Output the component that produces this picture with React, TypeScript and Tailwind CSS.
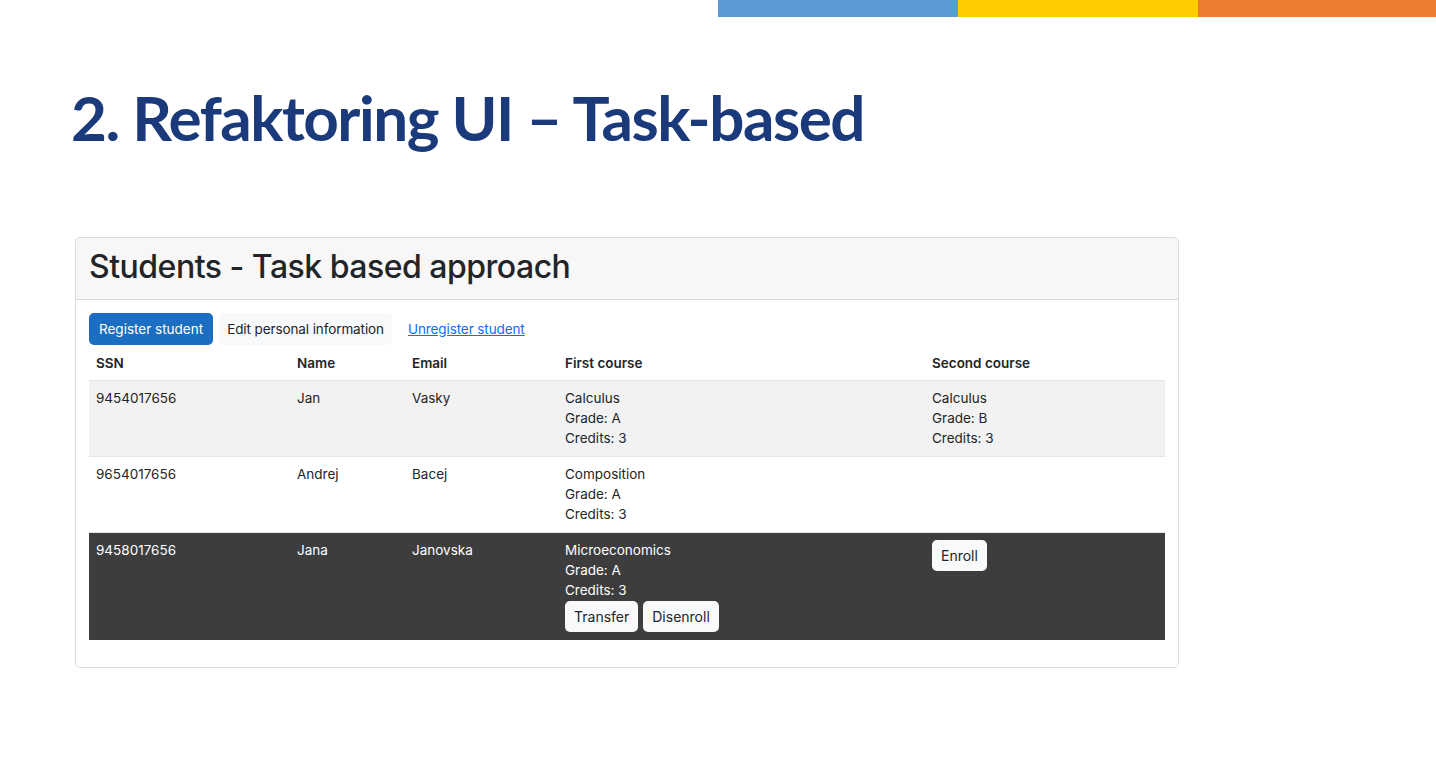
import React from 'react';

type Course = { name: string; grade: string; credits: number };
type Student = { ssn: string; name: string; email: string; first?: Course; second?: Course; dark?: boolean };

const students: Student[] = [
  { ssn: '9454017656', name: 'Jan', email: 'Vasky', first: { name: 'Calculus', grade: 'A', credits: 3 }, second: { name: 'Calculus', grade: 'B', credits: 3 } },
  { ssn: '9654017656', name: 'Andrej', email: 'Bacej', first: { name: 'Composition', grade: 'A', credits: 3 } },
  { ssn: '9458017656', name: 'Jana', email: 'Janovska', first: { name: 'Microeconomics', grade: 'A', credits: 3 }, dark: true },
];

function LightButton({ label }: { label: string }) {
  return (
    <button className="h-[31px] px-[9px] rounded-[5px] bg-[#f8f9fa] text-[#212529] text-[14px] leading-none">
      {label}
    </button>
  );
}

function CourseCell({ course }: { course?: Course }) {
  if (!course) return null;
  return (
    <div>
      <div>{course.name}</div>
      <div>Grade: {course.grade}</div>
      <div>Credits: {course.credits}</div>
    </div>
  );
}

export default function App() {
  return (
    <div className="w-[1436px] h-[778px] bg-white relative overflow-hidden">
      <div className="flex justify-end">
        <div className="w-[240px] h-[17px] bg-[#5b9bd5]" />
        <div className="w-[240px] h-[17px] bg-[#ffcc00]" />
        <div className="w-[238px] h-[17px] bg-[#ed7d31]" />
      </div>

      <h1
        className="ml-[71px] mt-[64px] text-[#1b3a7b] text-[62px] font-bold leading-[72px] tracking-[-1.5px]"
        style={{ fontFamily: 'Lato, "Open Sans", sans-serif' }}
      >
        2. Refaktoring UI – Task-based
      </h1>

      <div
        className="ml-[75px] mt-[84px] w-[1104px] h-[431px] border border-[#dcdcdc] rounded-[5px] text-[#212529]"
        style={{ fontFamily: 'Inter, "Liberation Sans", sans-serif' }}
      >
        <div className="h-[62px] bg-[#f7f7f7] border-b border-[#d8d8d8] flex items-center pb-[4px] px-[13px] rounded-t-[5px]">
          <span className="text-[32px] font-medium tracking-[-0.5px]">Students - Task based approach</span>
        </div>
        <div className="px-[13px] pt-[13px]">
          <div className="flex items-center gap-[6px] text-[13.5px]">
            <button className="h-[32px] px-[10px] rounded-[5px] bg-[#1b6ec2] text-white">Register student</button>
            <button className="h-[32px] px-[8px] rounded-[5px] bg-[#f8f9fa] text-[#212529] tracking-[-0.1px]">Edit personal information</button>
            <a className="ml-[10px] text-[#0d6efd] underline tracking-[-0.1px]">Unregister student</a>
          </div>
          <table className="w-[1076px] mt-[1px] text-[13.5px] leading-[20px] border-collapse">
            <colgroup>
              <col className="w-[201px]" />
              <col className="w-[115px]" />
              <col className="w-[153px]" />
              <col className="w-[367px]" />
              <col />
            </colgroup>
            <thead>
              <tr className="text-left">
                <th className="px-[7px] py-[7px] font-semibold">SSN</th>
                <th className="px-[7px] py-[7px] font-semibold">Name</th>
                <th className="px-[7px] py-[7px] font-semibold">Email</th>
                <th className="px-[7px] py-[7px] font-semibold">First course</th>
                <th className="px-[7px] py-[7px] font-semibold">Second course</th>
              </tr>
            </thead>
            <tbody>
              {students.map((s, i) => (
                <tr
                  key={s.ssn}
                  className={`align-top border-t border-[#e3e6e8] ${s.dark ? 'bg-[#3d3d3d] text-white' : i % 2 === 0 ? 'bg-[#f2f2f2]' : 'bg-white'}`}
                >
                  <td className="px-[7px] pt-[7px] pb-[8px]">{s.ssn}</td>
                  <td className="px-[7px] pt-[7px] pb-[8px]">{s.name}</td>
                  <td className="px-[7px] pt-[7px] pb-[8px]">{s.email}</td>
                  <td className="px-[7px] pt-[7px] pb-[8px]">
                    <CourseCell course={s.first} />
                    {s.dark && (
                      <div className="flex gap-[5px] mt-[1px]">
                        <LightButton label="Transfer" />
                        <LightButton label="Disenroll" />
                      </div>
                    )}
                  </td>
                  <td className="px-[7px] pt-[7px] pb-[8px]">
                    <CourseCell course={s.second} />
                    {s.dark && <LightButton label="Enroll" />}
                  </td>
                </tr>
              ))}
            </tbody>
          </table>
        </div>
      </div>
    </div>
  );
}
